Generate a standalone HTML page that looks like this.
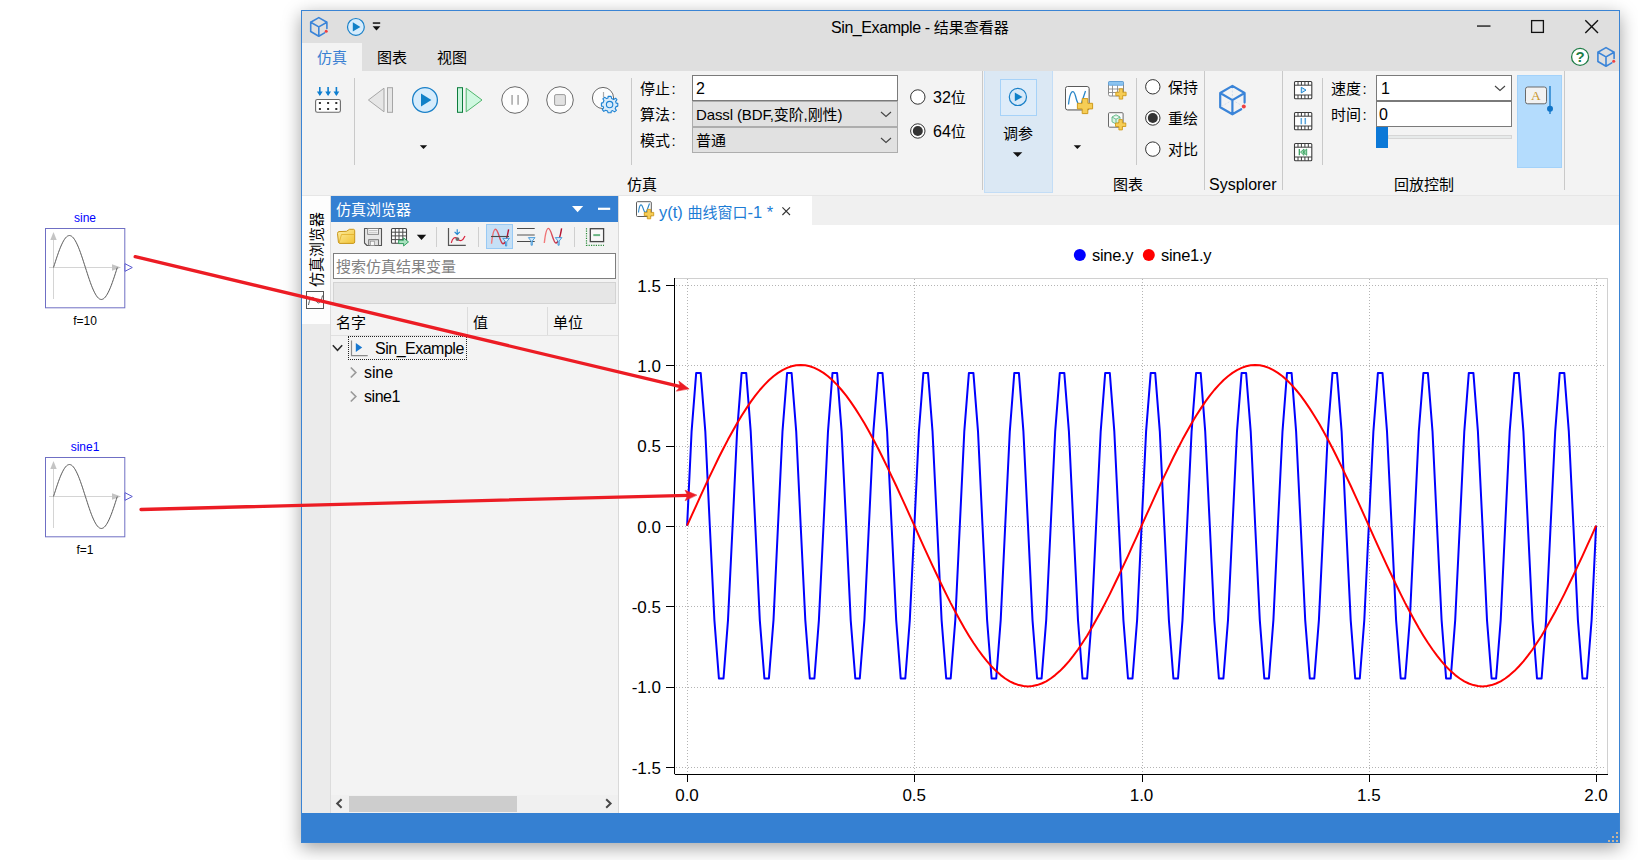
<!DOCTYPE html>
<html><head><meta charset="utf-8"><title>Sin_Example</title>
<style>
html,body{margin:0;padding:0;background:#fff;}
body{width:1638px;height:860px;position:relative;overflow:hidden;font-family:"Liberation Sans","Noto Sans CJK SC",sans-serif;font-size:15px;color:#000;}
.a{position:absolute;}
.t{position:absolute;white-space:nowrap;line-height:20px;height:20px;}
.c{transform:translateX(-50%);}
#win{left:301px;top:10px;width:1319px;height:833px;background:#f3f3f3;box-shadow:0 5px 17px 0 rgba(0,0,0,.37);}
#winb{left:301px;top:10px;width:1317px;height:831px;border:1px solid #3a84d4;pointer-events:none;}
#title{left:302px;top:11px;width:1317px;height:60px;background:#dfdfdf;}
#tab1{left:302px;top:43px;width:60px;height:28px;background:#f3f3f3;}
#ribbon{left:302px;top:71px;width:1317px;height:124px;background:#f3f3f3;}
#status{left:302px;top:813px;width:1317px;height:29px;background:#3580d2;}
.vs{position:absolute;width:1px;background:#c9c9c9;}
.inp{position:absolute;box-sizing:border-box;border:1px solid #7a7a7a;background:#fff;}
.cmb{position:absolute;box-sizing:border-box;border:1px solid #adadad;background:#e1e1e1;}
svg{overflow:visible;}

</style></head><body>
<div class="a" id="win"></div>
<div class="a" id="title"></div>
<div class="a" id="tab1"></div>
<div class="a" id="ribbon"></div>
<div class="a" id="status"></div>
<div class="t" style="left:831px;top:18px" id="ttl"><span style="font-size:16px;letter-spacing:-.42px">Sin_Example - </span>结果查看器</div>
<div class="t" style="left:317px;top:48px;color:#3a80d2" id="tb1">仿真</div>
<div class="t" style="left:377px;top:48px" id="tb2">图表</div>
<div class="t" style="left:437px;top:48px" id="tb3">视图</div>
<svg class="a" style="left:0;top:0" width="1638" height="80" viewBox="0 0 1638 80">
<!-- app cube -->
<g fill="none" stroke="#3a84d8" stroke-width="1.6" stroke-linejoin="round" stroke-linecap="round">
<path d="M326.9 28.5 L326.9 22.2 L318.8 17.6 L310.7 22.2 L310.7 31.5 L318.8 36.2 L324.6 32.9 M310.7 22.2 L318.8 26.9 L326.9 22.2 M318.8 26.9 V36.2"/>
</g>
<circle cx="326.2" cy="31.2" r="1.5" fill="#f04040"/>
<!-- quick play -->
<circle cx="355.9" cy="26.9" r="8.4" fill="#d6ecfc" stroke="#1a80c8" stroke-width="1.2"/>
<path d="M352.8 22.3 L360.4 26.9 L352.8 31.5 Z" fill="#0f80c8"/>
<rect x="372.8" y="22.3" width="7.4" height="1.5" fill="#111"/>
<path d="M372.6 26.3 H380.4 L376.5 30.6 Z" fill="#111"/>
<!-- window controls -->
<rect x="1477" y="25.4" width="13.5" height="1.3" fill="#111"/>
<rect x="1531.6" y="20.6" width="11.8" height="11.8" fill="none" stroke="#111" stroke-width="1.3"/>
<path d="M1585.3 20.3 L1598 33 M1598 20.3 L1585.3 33" stroke="#111" stroke-width="1.4" fill="none"/>
<!-- help -->
<circle cx="1580.1" cy="56.9" r="8.5" fill="#fff" stroke="#1f7d47" stroke-width="1.3"/>
<!-- right cube -->
<g fill="none" stroke="#3a84d8" stroke-width="1.6" stroke-linejoin="round" stroke-linecap="round">
<path d="M1614.1 58.5 L1614.1 52.2 L1606.0 47.6 L1597.9 52.2 L1597.9 61.5 L1606.0 66.2 L1611.8 62.9 M1597.9 52.2 L1606.0 56.9 L1614.1 52.2 M1606.0 56.9 V66.2"/>
</g>
<circle cx="1613.7" cy="61.2" r="1.5" fill="#f04040"/>
</svg>
<div class="t c" style="left:1580.2px;top:47px;font-size:15px;font-weight:bold;color:#1f7d47" id="hlp">?</div>
<!-- ribbon separators -->
<div class="vs" style="left:354px;top:78px;height:87px"></div>
<div class="vs" style="left:631px;top:78px;height:87px"></div>
<div class="vs" style="left:982px;top:71px;height:119px"></div>
<div class="vs" style="left:1136px;top:78px;height:87px"></div>
<div class="vs" style="left:1204px;top:71px;height:119px"></div>
<div class="vs" style="left:1282px;top:71px;height:119px"></div>
<div class="vs" style="left:1322px;top:78px;height:87px"></div>
<div class="vs" style="left:1564px;top:71px;height:119px"></div>
<!-- highlighted tune button -->
<div class="a" style="left:984px;top:71px;width:69px;height:122px;background:#dbe8f4;border:1px solid #c3ddf6;border-top:none;box-sizing:border-box"></div>
<div class="a" style="left:1000px;top:79px;width:37px;height:37px;background:#deecf9;border:1px solid #a6d2f8;box-sizing:border-box"></div>
<div class="a" style="left:1517px;top:75px;width:45px;height:93px;background:#b4dcfd;border:1px solid #a3d2fa;box-sizing:border-box"></div>
<!-- inputs -->
<div class="inp" style="left:692px;top:75px;width:206px;height:26px"></div>
<div class="cmb" style="left:692px;top:101px;width:206px;height:26px"></div>
<div class="cmb" style="left:692px;top:127px;width:206px;height:26px"></div>
<div class="inp" style="left:1376px;top:75px;width:136px;height:26px"></div>
<div class="inp" style="left:1376px;top:101px;width:136px;height:26px"></div>
<div class="a" style="left:1388px;top:135px;width:124px;height:4px;background:#e7eaea;border:1px solid #d6d6d6;box-sizing:border-box"></div>
<div class="a" style="left:1376px;top:127px;width:12px;height:21px;background:#0b78d7"></div>
<!-- texts -->
<div class="t" style="left:640px;top:79px" id="l1">停止<span style="margin-left:1.5px">:</span></div>
<div class="t" style="left:640px;top:105px" id="l2">算法<span style="margin-left:1.5px">:</span></div>
<div class="t" style="left:640px;top:131px" id="l3">模式<span style="margin-left:1.5px">:</span></div>
<div class="t" style="left:696px;top:79px;font-size:16px" id="v1">2</div>
<div class="t" style="left:696px;top:105px;font-size:15px;letter-spacing:-.12px" id="v2">Dassl (BDF,变阶,刚性)</div>
<div class="t" style="left:696px;top:131px" id="v3">普通</div>
<div class="t" style="left:933px;top:88px;font-size:16px" id="r32">32<span style="font-size:15px">位</span></div>
<div class="t" style="left:933px;top:122px;font-size:16px" id="r64">64<span style="font-size:15px">位</span></div>
<div class="t" style="left:1003px;top:124px" id="tune">调参</div>
<div class="t" style="left:1168px;top:78px" id="rb1">保持</div>
<div class="t" style="left:1168px;top:109px" id="rb2">重绘</div>
<div class="t" style="left:1168px;top:140px" id="rb3">对比</div>
<div class="t" style="left:1331px;top:79px" id="l4">速度<span style="margin-left:1.5px">:</span></div>
<div class="t" style="left:1331px;top:105px" id="l5">时间<span style="margin-left:1.5px">:</span></div>
<div class="t" style="left:1381px;top:79px;font-size:16px" id="v4">1</div>
<div class="t" style="left:1379px;top:105px;font-size:16px" id="v5">0</div>
<div class="t" style="left:627px;top:175px" id="g1">仿真</div>
<div class="t" style="left:1113px;top:175px" id="g2">图表</div>
<div class="t" style="left:1209px;top:175px;font-size:16px" id="g3">Sysplorer</div>
<div class="t" style="left:1394px;top:175px" id="g4">回放控制</div>
<svg class="a" style="left:0;top:0" width="1638" height="200" viewBox="0 0 1638 200">
<!-- icon1: arrows + dotted box -->
<g stroke="#0f7fd0" stroke-width="1.6" fill="none" stroke-linecap="butt">
<path d="M319.8 87 V94.5 M328.1 87 V94.5 M336.4 87 V94.5"/>
</g>
<g fill="#0f7fd0"><path d="M316.9 91.6 H322.7 L319.8 96 Z M325.2 91.6 H331 L328.1 96 Z M333.5 91.6 H339.3 L336.4 96 Z"/></g>
<rect x="315.6" y="99.5" width="24.8" height="12.8" rx="1.8" fill="#fff" stroke="#6a6a6a" stroke-width="1.1"/>
<g fill="#333"><rect x="318.9" y="102" width="2" height="2"/><rect x="327.1" y="102" width="2" height="2"/><rect x="335.3" y="102" width="2" height="2"/><rect x="318.9" y="108" width="2" height="2"/><rect x="327.1" y="108" width="2" height="2"/><rect x="335.3" y="108" width="2" height="2"/></g>
<!-- step back -->
<path d="M368.4 100 L384 88.2 V111.8 Z" fill="#e6e6e6" stroke="#a6a6a6" stroke-width="1"/>
<rect x="387.5" y="87.7" width="5" height="24.6" fill="#e6e6e6" stroke="#a6a6a6" stroke-width="1"/>
<!-- play -->
<circle cx="425" cy="100" r="12.4" fill="#d6ecfc" stroke="#1a80c8" stroke-width="1.3"/>
<path d="M421 93.4 L431.4 100 L421 106.6 Z" fill="#0f80c8"/>
<path d="M419.8 145.2 H427.2 L423.5 149 Z" fill="#111"/>
<!-- step fwd -->
<rect x="457.5" y="87.7" width="5" height="24.6" fill="#c9f5dd" stroke="#0c7c3c" stroke-width="1"/>
<path d="M466.2 88.2 L482 100 L466.2 111.8 Z" fill="#cff8e0" stroke="#4fb56c" stroke-width="1"/>
<!-- pause -->
<circle cx="515" cy="100" r="13.3" fill="#fdfdfd" stroke="#6a6a6a" stroke-width="1"/>
<path d="M512.1 95 V104.7 M518.1 95 V104.7" stroke="#b4b4b4" stroke-width="1.8"/>
<!-- stop -->
<circle cx="560" cy="100" r="13.3" fill="#fdfdfd" stroke="#6a6a6a" stroke-width="1"/>
<rect x="554.6" y="94.6" width="10.8" height="10.8" rx="1.5" fill="#e2e2e2" stroke="#9a9a9a" stroke-width="1"/>
<!-- clock + gear -->
<circle cx="603" cy="98" r="10.6" fill="#fdfdfd" stroke="#6a6a6a" stroke-width="1"/>
<path d="M603.5 92 V97.5" stroke="#aaa" stroke-width="1.2"/>
<g id="gear" transform="translate(609.6 104.6)">
<path d="M-1.5 -8.2 H1.5 L2.1 -6 L4 -5.1 L6 -6.4 L7.3 -5 L6 -3 L6.7 -1.3 L8.2 -1.2 V1.5 L6.5 2 L5.6 4 L6.8 5.8 L5 7.3 L3 6 L1.6 6.6 L1.5 8.2 H-1.5 L-2 6.5 L-4 5.6 L-5.8 6.8 L-7.3 5 L-6 3 L-6.6 1.6 L-8.2 1.5 V-1.5 L-6.5 -2 L-5.6 -4 L-6.8 -5.8 L-5 -7.3 L-3 -6 L-1.6 -6.6 Z" fill="#d9ecfb" stroke="#1e82d2" stroke-width="1.1" stroke-linejoin="round"/>
<circle cx="0" cy="0" r="3.2" fill="#d6ebfb" stroke="#1e82d2" stroke-width="1.1"/>
</g>
<!-- combos chevrons -->
<g fill="none" stroke="#444" stroke-width="1.1">
<path d="M881 112 L886 116.5 L891 112"/><path d="M881 138 L886 142.5 L891 138"/><path d="M1495 86 L1500 90.5 L1505 86"/>
</g>
<!-- radios 32/64 -->
<g fill="#fff" stroke="#333" stroke-width="1">
<circle cx="917.8" cy="97" r="7.2"/><circle cx="917.8" cy="131" r="7.2"/>
<circle cx="1152.8" cy="86.8" r="7.2"/><circle cx="1152.8" cy="118" r="7.2"/><circle cx="1152.8" cy="149.1" r="7.2"/>
</g>
<circle cx="917.8" cy="131" r="5" fill="#333"/><circle cx="1152.8" cy="118" r="5" fill="#333"/>
<!-- tune play -->
<circle cx="1017.9" cy="96.9" r="8.6" fill="#d6e9f9" stroke="#1a80c8" stroke-width="1.2"/>
<path d="M1014.8 92.6 L1022.5 96.9 L1014.8 101.3 Z" fill="#0f80c8"/>
<path d="M1012.9 152.2 H1022.3 L1017.6 157 Z" fill="#111"/>
<!-- chart+ icon -->
<rect x="1066.2" y="87.2" width="23.6" height="23.4" rx="2" fill="#9a9a9a" opacity=".5"/>
<rect x="1065.5" y="86.5" width="23.6" height="23.4" rx="2" fill="#fff" stroke="#5a5a5a" stroke-width="1"/>
<path d="M1068.5 104.5 C1070 90 1073.5 88.5 1075.5 96 C1077.500 104 1080 110 1082.5 100 L1085.5 91" fill="none" stroke="#2a86c8" stroke-width="1.3"/>
<path d="M1082.2 98.6 H1087.8 V103.3 H1092.6 V108.9 H1087.8 V113.6 H1082.2 V108.9 H1077.4 V103.3 H1082.2 Z" fill="#f6cd55" stroke="#cf9a1c" stroke-width="1" stroke-linejoin="round"/>
<path d="M1073.700 145.2 H1081.1 L1077.4 149 Z" fill="#111"/>
<!-- table+ icon -->
<rect x="1108.5" y="81.500" width="15" height="14.5" rx="1.5" fill="#fff" stroke="#8a8a8a" stroke-width="1"/>
<rect x="1108.500" y="81.500" width="15" height="3.8" rx="1" fill="#8cc4f0" stroke="#5aa0dc" stroke-width=".8"/>
<path d="M1108.5 89 H1123.5 M1108.5 92.500 H1123.5 M1112.5 85.5 V96 M1117.5 85.5 V96" stroke="#8a8a8a" stroke-width=".9" fill="none"/>
<path d="M1119.2 88.8 H1122.700 V92.2 H1126.100 V95.700 H1122.700 V99.100 H1119.2 V95.700 H1115.8 V92.2 H1119.2 Z" fill="#f6cd55" stroke="#cf9a1c" stroke-width=".9" stroke-linejoin="round"/>
<!-- cube+ icon -->
<rect x="1108.500" y="112.700" width="14.600" height="14.500" rx="1" fill="#fbfbfb" stroke="#6a6a6a" stroke-width="1"/>
<path d="M1116 114.800 L1120 117 V121.800 L1116 124 L1112 121.800 V117 Z M1112 117 L1116 119.2 L1120 117 M1116 119.2 V124" fill="#d8f2e2" stroke="#5fb583" stroke-width=".9" stroke-linejoin="round"/>
<path d="M1118.900 119.600 H1122.400 V123 H1125.800 V126.500 H1122.400 V129.900 H1118.900 V126.500 H1115.500 V123 H1118.900 Z" fill="#f6cd55" stroke="#cf9a1c" stroke-width=".9" stroke-linejoin="round"/>
<!-- sysplorer cube -->
<g stroke="#c3d6ec" stroke-width=".7" stroke-dasharray="2 1.5" fill="none"><path d="M1232.4 87 V100.1 M1232.4 100.1 L1221 106.700 M1232.4 100.1 L1243.500 106.500"/></g>
<g fill="none" stroke="#3a84d8" stroke-width="2.2" stroke-linejoin="round" stroke-linecap="round">
<path d="M1244.6 102.6 L1244.6 93.0 L1232.4 85.9 L1220.2 93.0 L1220.2 107.2 L1232.4 114.3 L1241.2 109.2 M1220.2 93.0 L1232.4 100.1 L1244.6 93.0 M1232.4 100.1 V114.3"/>
</g>

<circle cx="1243.800" cy="106.500" r="2" fill="#f04040"/>
<!-- film icons -->
<g>
<rect x="1294.500" y="81.500" width="17.300" height="17.300" rx="1" fill="#fff" stroke="#3c3c3c" stroke-width="1.1"/>
<path d="M1294.500 85.200 H1311.800 M1294.500 95 H1311.800" stroke="#3c3c3c" stroke-width="1" fill="none"/>
<path d="M1298 81.500 V85.200 M1301.400 81.500 V85.200 M1304.900 81.500 V85.200 M1308.300 81.500 V85.200 M1298 95 V98.800 M1301.400 95 V98.800 M1304.900 95 V98.800 M1308.300 95 V98.800" stroke="#3c3c3c" stroke-width="1" fill="none"/>
</g>
<g transform="translate(0 31)">
<rect x="1294.500" y="81.500" width="17.300" height="17.300" rx="1" fill="#fff" stroke="#3c3c3c" stroke-width="1.1"/>
<path d="M1294.500 85.200 H1311.800 M1294.500 95 H1311.800" stroke="#3c3c3c" stroke-width="1" fill="none"/>
<path d="M1298 81.500 V85.200 M1301.400 81.500 V85.200 M1304.900 81.500 V85.200 M1308.300 81.500 V85.200 M1298 95 V98.800 M1301.400 95 V98.800 M1304.900 95 V98.800 M1308.300 95 V98.800" stroke="#3c3c3c" stroke-width="1" fill="none"/>
</g>
<g transform="translate(0 62)">
<rect x="1294.500" y="81.500" width="17.300" height="17.300" rx="1" fill="#fff" stroke="#3c3c3c" stroke-width="1.1"/>
<path d="M1294.500 85.200 H1311.800 M1294.500 95 H1311.800" stroke="#3c3c3c" stroke-width="1" fill="none"/>
<path d="M1298 81.500 V85.200 M1301.400 81.500 V85.200 M1304.900 81.500 V85.200 M1308.300 81.500 V85.200 M1298 95 V98.800 M1301.400 95 V98.800 M1304.900 95 V98.800 M1308.300 95 V98.800" stroke="#3c3c3c" stroke-width="1" fill="none"/>
</g>
<path d="M1301.300 87.300 L1306 90.100 L1301.300 92.900 Z" fill="#d5ebfb" stroke="#1e86d0" stroke-width="1"/>
<path d="M1301.300 118 V124.300 M1305.300 118 V124.300" stroke="#5aa6dc" stroke-width="1.5"/>
<path d="M1299.300 149 V155.300" stroke="#2e9a55" stroke-width="1.200"/><path d="M1300.500 152.100 L1304 149 V155.300 Z M1303.200 152.100 L1306.700 149 V155.300 Z" fill="#9ad8b0" stroke="#2e9a55" stroke-width=".8"/>
<!-- A button -->
<rect x="1525.500" y="87" width="21" height="16.800" rx="2.200" fill="#f2f2f2" stroke="#6a6a6a" stroke-width="1"/>
<path d="M1550 86 V114" stroke="#0f74c8" stroke-width="1.300"/>
<circle cx="1550" cy="108.800" r="3" fill="#0f74c8"/>
</svg>
<div class="t" style="left:1531px;top:85.500px;font-family:'Liberation Serif',serif;font-size:13.500px;color:#c9952b" id="abtn">A</div>
<!-- dock area -->
<div class="a" style="left:302px;top:195px;width:1317px;height:1px;background:#e6e6e6"></div>
<div class="a" style="left:302px;top:196px;width:29px;height:617px;background:#ebebeb"></div>
<div class="a" style="left:302px;top:196px;width:29px;height:128px;background:#fdfdfd"></div>
<div class="a" style="left:331px;top:196px;width:287px;height:617px;background:#f3f3f3"></div>
<div class="a" style="left:330px;top:196px;width:1px;height:617px;background:#dcdcdc"></div>
<div class="a" style="left:618px;top:196px;width:1px;height:617px;background:#d9d9d9"></div>
<div class="a" style="left:331px;top:196px;width:287px;height:26px;background:#3580d2"></div>
<div class="a" style="left:619px;top:196px;width:1000px;height:29px;background:#f0f0f0"></div>
<div class="a" style="left:619px;top:196px;width:193px;height:29px;background:#fff"></div>
<div class="a" style="left:619px;top:225px;width:1000px;height:588px;background:#fff"></div>
<div class="t" style="left:336px;top:200px;color:#fff" id="dk">仿真浏览器</div>
<div class="t" style="left:659px;top:202px;color:#1c7cd5" id="ct"><span style="font-size:16.5px">y(t) </span>曲线窗口<span style="font-size:16.5px">-1 *</span></div>
<div class="t" id="vt" style="left:307px;top:286.5px;width:75px;transform-origin:0 0;transform:translate(0,0) rotate(-90deg)">仿真浏览器</div>
<!-- toolbar highlight -->
<div class="a" style="left:486px;top:224px;width:27px;height:25px;background:#c6e0f6;border:1px solid #98c9f4;box-sizing:border-box"></div>
<div class="vs" style="left:436px;top:227px;height:20px;background:#cfcfcf"></div>
<div class="vs" style="left:478px;top:227px;height:20px;background:#cfcfcf"></div>
<div class="vs" style="left:574px;top:227px;height:20px;background:#cfcfcf"></div>
<div class="inp" style="left:333px;top:253px;width:283px;height:26px;border-color:#7e7e7e"></div>
<div class="t" style="left:336px;top:257px;color:#828282" id="ph">搜索仿真结果变量</div>
<div class="a" style="left:333px;top:282px;width:283px;height:22px;background:#e6e6e6;border:1px solid #d3d3d3;box-sizing:border-box"></div>
<!-- header -->
<div class="vs" style="left:467px;top:307px;height:28px;background:#dcdcdc"></div>
<div class="vs" style="left:547px;top:307px;height:28px;background:#dcdcdc"></div>
<div class="a" style="left:331px;top:335px;width:287px;height:1px;background:#e0e0e0"></div>
<div class="t" style="left:336px;top:313px" id="h1">名字</div>
<div class="t" style="left:473px;top:313px" id="h2">值</div>
<div class="t" style="left:553px;top:313px" id="h3">单位</div>
<div class="a" style="left:348px;top:336px;width:119px;height:24px;border:1px dotted #222;box-sizing:border-box"></div>
<div class="t" style="left:375px;top:339px;font-size:16px;letter-spacing:-.5px" id="tr1">Sin_Example</div>
<div class="t" style="left:364px;top:363px;font-size:16px;letter-spacing:-.1px" id="tr2">sine</div>
<div class="t" style="left:364px;top:387px;font-size:16px;letter-spacing:-.45px" id="tr3">sine1</div>
<!-- h scrollbar -->
<div class="a" style="left:331px;top:795px;width:287px;height:18px;background:#f0f0f0"></div>
<div class="a" style="left:349px;top:796px;width:168px;height:16px;background:#cdcdcd"></div>
<svg class="a" style="left:0;top:0" width="1638" height="860" viewBox="0 0 1638 860">
<defs>
<linearGradient id="gf" x1="0" y1="0" x2="1" y2="1"><stop offset="0" stop-color="#fdeea6"/><stop offset="1" stop-color="#f1c232"/></linearGradient>
<linearGradient id="gr" x1="0" y1="0" x2="1" y2="0"><stop offset="0" stop-color="#f47c7c"/><stop offset="1" stop-color="#b00d2c"/></linearGradient>
</defs>
<!-- dock title controls -->
<path d="M572 206 H583.2 L577.6 212.2 Z" fill="#fff"/>
<rect x="598" y="207.700" width="12.200" height="2.200" fill="#fff"/>
<!-- vertical tab icon -->
<rect x="306.500" y="291.500" width="17" height="17" fill="#fff" stroke="#555" stroke-width="1"/>
<path d="M308.500 305 C310 296.500 313 295.500 315.500 300 C318 304.500 320.500 304.500 322.500 295.500" fill="none" stroke="#555" stroke-width="1"/>
<!-- folder -->
<path d="M337.500 233.500 Q337.500 231.800 339 231.600 L346.500 231.300 L349.500 229.300 H353.500 Q354.700 229.400 354.700 230.800 V242 Q354.700 243.300 353.300 243.400 H340 Q338.600 243.300 338.400 242 Z" fill="url(#gf)" stroke="#c8961a" stroke-width="1" stroke-linejoin="round"/>
<path d="M339 243 L341.500 234.500 H354.500" fill="none" stroke="#e0ae2a" stroke-width=".8"/>
<!-- floppy -->
<path d="M364.500 228.500 H381.500 V245.500 H367 L364.500 243 Z" fill="#e6e6e6" stroke="#555" stroke-width="1.1" stroke-linejoin="round"/>
<rect x="367.700" y="228.500" width="10.800" height="5.800" fill="#fafafa" stroke="#7a7a7a" stroke-width=".9"/>
<path d="M369 230.500 H377.500 M369 232.300 H377.500" stroke="#aaa" stroke-width=".7"/>
<rect x="368.700" y="239.700" width="9.800" height="5.800" fill="#e0e0e0" stroke="#6a6a6a" stroke-width=".9"/>
<rect x="370.300" y="241.200" width="4" height="4.300" fill="#fafafa" stroke="#8a8a8a" stroke-width=".7"/>
<!-- grid -->
<rect x="391.500" y="228.500" width="15" height="14.800" rx="1" fill="#fff" stroke="#444" stroke-width="1.1"/>
<path d="M395.300 228.500 V243.300 M399 228.500 V243.300 M402.800 228.500 V243.300 M391.500 232.200 H406.500 M391.500 235.900 H406.500 M391.500 239.600 H406.500" stroke="#4a4a4a" stroke-width="1" fill="none"/>
<path d="M398.700 240.200 H403.600 V237.800 L408.500 241.900 L403.600 246 V243.600 H398.700 Z" fill="#a9e2bf" stroke="#2a9d5a" stroke-width=".9" stroke-linejoin="round"/>
<path d="M416.800 234.800 H426.200 L421.500 240 Z" fill="#111"/>
<!-- axis icon -->
<path d="M448.500 228 V245.300 H465.800" fill="none" stroke="#555" stroke-width="1.200"/>
<path d="M451.300 242.800 C452.500 237.500 455 236.500 457.400 238.800 C460 241.500 462.500 241.500 465 236" fill="none" stroke="#d8203a" stroke-width="1.200"/>
<circle cx="457.400" cy="239.100" r="1.900" fill="#6a6a6a"/>
<path d="M457.200 229.300 V234.300 M454.600 231.800 L457.200 234.500 L459.800 231.800" fill="none" stroke="#1e86d0" stroke-width="1.100"/>
<!-- filter curve icon (active) -->
<path d="M491.500 243.800 C492.500 234 493.500 229.300 495.500 229.300 C498.500 229.300 500 243.800 503 243.800 C505.500 243.800 507.500 236 508.600 229.300" fill="none" stroke="url(#gr)" stroke-width="1.400"/>
<path d="M491 236.500 H509" stroke="#4a4a4a" stroke-width="1.100"/>
<path d="M502.800 238.400 H509.400 L506.700 241.800 V246 H505.500 V241.800 Z" fill="#d6ebfa" stroke="#2a8ad4" stroke-width=".8" stroke-linejoin="round"/>
<!-- lines filter icon -->
<path d="M517 228.500 H534.700 M517 241.500 H534.700" stroke="#4a4a4a" stroke-width="1.100"/>
<path d="M517 235 H534.700" stroke="#9a9a9a" stroke-width="1.800"/>
<path d="M528.400 237.600 H535 L532.300 241 V245.200 H531.100 V241 Z" fill="#d6ebfa" stroke="#2a8ad4" stroke-width=".8" stroke-linejoin="round"/>
<!-- curve filter icon -->
<path d="M544.300 243 C545.300 233.500 546.500 228.400 548.400 228.400 C551.400 228.400 553 243 556 243 C558.500 243 560.500 235 561.600 228.400" fill="none" stroke="url(#gr)" stroke-width="1.400"/>
<path d="M555.300 237.600 H561.900 L559.200 241 V245.200 H558 V241 Z" fill="#d6ebfa" stroke="#2a8ad4" stroke-width=".8" stroke-linejoin="round"/>
<!-- collapse icon -->
<path d="M586.500 228.200 V245.300 H604" fill="none" stroke="#2a8a3a" stroke-width="1.200" stroke-dasharray="1.200 1.200"/>
<rect x="590.300" y="228.700" width="13.300" height="12.900" fill="#f8f8f8" stroke="#444" stroke-width="1.300"/>
<path d="M593.300 235.100 H600.100" stroke="#6ab583" stroke-width="2"/>
<!-- tab icon -->
<rect x="636.500" y="201.700" width="14.800" height="14.800" rx="1" fill="#fff" stroke="#5a5a5a" stroke-width="1"/>
<path d="M638.500 212.500 C639.500 203.500 641.500 203 643 208 C644.500 213 646 214 647.500 209 L649.500 203.500" fill="none" stroke="#2a86c8" stroke-width="1.100"/>
<path d="M647.300 209.400 H650.700 V212.400 H653.700 V215.800 H650.700 V218.800 H647.300 V215.800 H644.300 V212.400 H647.300 Z" fill="#f6cd55" stroke="#cf9a1c" stroke-width=".9" stroke-linejoin="round"/>
<path d="M782.400 207.400 L790 215 M790 207.400 L782.400 215" stroke="#333" stroke-width="1.100" fill="none"/>
<!-- tree chevrons -->
<path d="M332.800 345.300 L337.500 350.300 L342.200 345.300" fill="none" stroke="#2a2a2a" stroke-width="1.500"/>
<path d="M350.800 367.500 L355.800 372.500 L350.800 377.500" fill="none" stroke="#9a9a9a" stroke-width="1.700"/>
<path d="M350.800 391.500 L355.800 396.500 L350.800 401.500" fill="none" stroke="#9a9a9a" stroke-width="1.700"/>
<!-- tree icon -->
<path d="M351.500 340.600 V355.700 H367.700" fill="none" stroke="#8a8a8a" stroke-width="1.200"/>
<path d="M355.800 343 L362.200 347.500 L355.800 352 Z" fill="#1778d0"/>
<!-- scrollbar arrows -->
<path d="M341.600 799.300 L337.200 803.500 L341.600 807.700" fill="none" stroke="#484848" stroke-width="2"/>
<path d="M606.200 799.300 L610.600 803.500 L606.200 807.700" fill="none" stroke="#484848" stroke-width="2"/>
<!-- status grip -->
<g fill="#c9b49a" transform="translate(1 1)"><rect x="1615" y="831" width="2" height="2"/><rect x="1611" y="835" width="2" height="2"/><rect x="1615" y="835" width="2" height="2"/><rect x="1607" y="839" width="2" height="2"/><rect x="1611" y="839" width="2" height="2"/><rect x="1615" y="839" width="2" height="2"/></g>
</svg>
<svg class="a" style="left:0;top:0" width="1638" height="860" viewBox="0 0 1638 860">
<rect x="674.5" y="278.5" width="933" height="496" fill="#fff" stroke="#d0d0d0"/>
<g stroke="#b4b4b4" stroke-width="1" stroke-dasharray="1 2" shape-rendering="crispEdges"><line x1="676" y1="285.5" x2="1605" y2="285.5"/><line x1="676" y1="365.5" x2="1605" y2="365.5"/><line x1="676" y1="446.5" x2="1605" y2="446.5"/><line x1="676" y1="526.5" x2="1605" y2="526.5"/><line x1="676" y1="606.5" x2="1605" y2="606.5"/><line x1="676" y1="687.5" x2="1605" y2="687.5"/><line x1="676" y1="767.5" x2="1605" y2="767.5"/><line x1="687.5" y1="279" x2="687.5" y2="774"/><line x1="914.5" y1="279" x2="914.5" y2="774"/><line x1="1142.5" y1="279" x2="1142.5" y2="774"/><line x1="1369.5" y1="279" x2="1369.5" y2="774"/><line x1="1596.5" y1="279" x2="1596.5" y2="774"/></g>
<polyline transform="translate(-.4 -.8)" points="687.5,526.5 692.0,432.1 696.6,373.7 701.1,373.7 705.7,432.1 710.2,526.5 714.8,620.9 719.3,679.3 723.9,679.3 728.4,620.9 733.0,526.5 737.5,432.1 742.0,373.7 746.6,373.7 751.1,432.1 755.7,526.5 760.2,620.9 764.8,679.3 769.3,679.3 773.9,620.9 778.4,526.5 782.9,432.1 787.5,373.7 792.0,373.7 796.6,432.1 801.1,526.5 805.7,620.9 810.2,679.3 814.8,679.3 819.3,620.9 823.9,526.5 828.4,432.1 832.9,373.7 837.5,373.7 842.0,432.1 846.6,526.5 851.1,620.9 855.7,679.3 860.2,679.3 864.8,620.9 869.3,526.5 873.8,432.1 878.4,373.7 882.9,373.7 887.5,432.1 892.0,526.5 896.6,620.9 901.1,679.3 905.7,679.3 910.2,620.9 914.8,526.5 919.3,432.1 923.8,373.7 928.4,373.7 932.9,432.1 937.5,526.5 942.0,620.9 946.6,679.3 951.1,679.3 955.7,620.9 960.2,526.5 964.7,432.1 969.3,373.7 973.8,373.7 978.4,432.1 982.9,526.5 987.5,620.9 992.0,679.3 996.6,679.3 1001.1,620.9 1005.6,526.5 1010.2,432.1 1014.7,373.7 1019.3,373.7 1023.8,432.1 1028.4,526.5 1032.9,620.9 1037.5,679.3 1042.0,679.3 1046.6,620.9 1051.1,526.5 1055.6,432.1 1060.2,373.7 1064.7,373.7 1069.3,432.1 1073.8,526.5 1078.4,620.9 1082.9,679.3 1087.5,679.3 1092.0,620.9 1096.5,526.5 1101.1,432.1 1105.6,373.7 1110.2,373.7 1114.7,432.1 1119.3,526.5 1123.8,620.9 1128.4,679.3 1132.9,679.3 1137.5,620.9 1142.0,526.5 1146.5,432.1 1151.1,373.7 1155.6,373.7 1160.2,432.1 1164.7,526.5 1169.3,620.9 1173.8,679.3 1178.4,679.3 1182.9,620.9 1187.5,526.5 1192.0,432.1 1196.5,373.7 1201.1,373.7 1205.6,432.1 1210.2,526.5 1214.7,620.9 1219.3,679.3 1223.8,679.3 1228.4,620.9 1232.9,526.5 1237.4,432.1 1242.0,373.7 1246.5,373.7 1251.1,432.1 1255.6,526.5 1260.2,620.9 1264.7,679.3 1269.3,679.3 1273.8,620.9 1278.3,526.5 1282.9,432.1 1287.4,373.7 1292.0,373.7 1296.5,432.1 1301.1,526.5 1305.6,620.9 1310.2,679.3 1314.7,679.3 1319.3,620.9 1323.8,526.5 1328.3,432.1 1332.9,373.7 1337.4,373.7 1342.0,432.1 1346.5,526.5 1351.1,620.9 1355.6,679.3 1360.2,679.3 1364.7,620.9 1369.2,526.5 1373.8,432.1 1378.3,373.7 1382.9,373.7 1387.4,432.1 1392.0,526.5 1396.5,620.9 1401.1,679.3 1405.6,679.3 1410.2,620.9 1414.7,526.5 1419.2,432.1 1423.8,373.7 1428.3,373.7 1432.9,432.1 1437.4,526.5 1442.0,620.9 1446.5,679.3 1451.1,679.3 1455.6,620.9 1460.2,526.5 1464.7,432.1 1469.2,373.7 1473.8,373.7 1478.3,432.1 1482.9,526.5 1487.4,620.9 1492.0,679.3 1496.5,679.3 1501.1,620.9 1505.6,526.5 1510.1,432.1 1514.7,373.7 1519.2,373.7 1523.8,432.1 1528.3,526.5 1532.9,620.9 1537.4,679.3 1542.0,679.3 1546.5,620.9 1551.0,526.5 1555.6,432.1 1560.1,373.7 1564.7,373.7 1569.2,432.1 1573.8,526.5 1578.3,620.9 1582.9,679.3 1587.4,679.3 1592.0,620.9 1596.5,526.5" fill="none" stroke="#0000ff" stroke-width="2" stroke-linejoin="round"/>
<polyline transform="translate(-.4 -.8)" points="687.5,526.5 692.0,516.4 696.6,506.4 701.1,496.4 705.7,486.5 710.2,476.9 714.8,467.4 719.3,458.1 723.9,449.1 728.4,440.4 733.0,432.1 737.5,424.1 742.0,416.5 746.6,409.4 751.1,402.7 755.7,396.5 760.2,390.8 764.8,385.7 769.3,381.1 773.9,377.1 778.4,373.7 782.9,370.9 787.5,368.7 792.0,367.1 796.6,366.1 801.1,365.8 805.7,366.1 810.2,367.1 814.8,368.7 819.3,370.9 823.9,373.7 828.4,377.1 832.9,381.1 837.5,385.7 842.0,390.8 846.6,396.5 851.1,402.7 855.7,409.4 860.2,416.5 864.8,424.1 869.3,432.1 873.8,440.4 878.4,449.1 882.9,458.1 887.5,467.4 892.0,476.9 896.6,486.5 901.1,496.4 905.7,506.4 910.2,516.4 914.8,526.5 919.3,536.6 923.8,546.6 928.4,556.6 932.9,566.5 937.5,576.1 942.0,585.6 946.6,594.9 951.1,603.9 955.7,612.6 960.2,620.9 964.7,628.9 969.3,636.5 973.8,643.6 978.4,650.3 982.9,656.5 987.5,662.2 992.0,667.3 996.6,671.9 1001.1,675.9 1005.6,679.3 1010.2,682.1 1014.7,684.3 1019.3,685.9 1023.8,686.9 1028.4,687.2 1032.9,686.9 1037.5,685.9 1042.0,684.3 1046.6,682.1 1051.1,679.3 1055.6,675.9 1060.2,671.9 1064.7,667.3 1069.3,662.2 1073.8,656.5 1078.4,650.3 1082.9,643.6 1087.5,636.5 1092.0,628.9 1096.5,620.9 1101.1,612.6 1105.6,603.9 1110.2,594.9 1114.7,585.6 1119.3,576.1 1123.8,566.5 1128.4,556.6 1132.9,546.6 1137.5,536.6 1142.0,526.5 1146.5,516.4 1151.1,506.4 1155.6,496.4 1160.2,486.5 1164.7,476.9 1169.3,467.4 1173.8,458.1 1178.4,449.1 1182.9,440.4 1187.5,432.1 1192.0,424.1 1196.5,416.5 1201.1,409.4 1205.6,402.7 1210.2,396.5 1214.7,390.8 1219.3,385.7 1223.8,381.1 1228.4,377.1 1232.9,373.7 1237.4,370.9 1242.0,368.7 1246.5,367.1 1251.1,366.1 1255.6,365.8 1260.2,366.1 1264.7,367.1 1269.3,368.7 1273.8,370.9 1278.3,373.7 1282.9,377.1 1287.4,381.1 1292.0,385.7 1296.5,390.8 1301.1,396.5 1305.6,402.7 1310.2,409.4 1314.7,416.5 1319.3,424.1 1323.8,432.1 1328.3,440.4 1332.9,449.1 1337.4,458.1 1342.0,467.4 1346.5,476.9 1351.1,486.5 1355.6,496.4 1360.2,506.4 1364.7,516.4 1369.2,526.5 1373.8,536.6 1378.3,546.6 1382.9,556.6 1387.4,566.5 1392.0,576.1 1396.5,585.6 1401.1,594.9 1405.6,603.9 1410.2,612.6 1414.7,620.9 1419.2,628.9 1423.8,636.5 1428.3,643.6 1432.9,650.3 1437.4,656.5 1442.0,662.2 1446.5,667.3 1451.1,671.9 1455.6,675.9 1460.2,679.3 1464.7,682.1 1469.2,684.3 1473.8,685.9 1478.3,686.9 1482.9,687.2 1487.4,686.9 1492.0,685.9 1496.5,684.3 1501.1,682.1 1505.6,679.3 1510.1,675.9 1514.7,671.9 1519.2,667.3 1523.8,662.2 1528.3,656.5 1532.9,650.3 1537.4,643.6 1542.0,636.5 1546.5,628.9 1551.0,620.9 1555.6,612.6 1560.1,603.9 1564.7,594.9 1569.2,585.6 1573.8,576.1 1578.3,566.5 1582.9,556.6 1587.4,546.6 1592.0,536.6 1596.5,526.5" fill="none" stroke="#ff0000" stroke-width="2" stroke-linejoin="round"/>
<g stroke="#000" stroke-width="1" shape-rendering="crispEdges"><line x1="666" y1="285.5" x2="674" y2="285.5"/><line x1="666" y1="365.5" x2="674" y2="365.5"/><line x1="666" y1="446.5" x2="674" y2="446.5"/><line x1="666" y1="526.5" x2="674" y2="526.5"/><line x1="666" y1="606.5" x2="674" y2="606.5"/><line x1="666" y1="687.5" x2="674" y2="687.5"/><line x1="666" y1="767.5" x2="674" y2="767.5"/><line x1="687.5" y1="775" x2="687.5" y2="782"/><line x1="914.5" y1="775" x2="914.5" y2="782"/><line x1="1142.5" y1="775" x2="1142.5" y2="782"/><line x1="1369.5" y1="775" x2="1369.5" y2="782"/><line x1="1596.5" y1="775" x2="1596.5" y2="782"/></g>
<g stroke="#000" stroke-width="1" shape-rendering="crispEdges"><line x1="674.5" y1="278" x2="674.5" y2="774"/><line x1="675" y1="774.5" x2="1608" y2="774.5"/></g>
<g font-family="Liberation Sans, sans-serif" font-size="17" fill="#000"><text x="661" y="291.7" text-anchor="end">1.5</text><text x="661" y="372.0" text-anchor="end">1.0</text><text x="661" y="452.4" text-anchor="end">0.5</text><text x="661" y="532.7" text-anchor="end">0.0</text><text x="661" y="613.0" text-anchor="end">-0.5</text><text x="661" y="693.4" text-anchor="end">-1.0</text><text x="661" y="773.7" text-anchor="end">-1.5</text><text x="687.0" y="800.7" text-anchor="middle">0.0</text><text x="914.2" y="800.7" text-anchor="middle">0.5</text><text x="1141.5" y="800.7" text-anchor="middle">1.0</text><text x="1368.8" y="800.7" text-anchor="middle">1.5</text><text x="1596.0" y="800.7" text-anchor="middle">2.0</text></g>
<g font-family="Liberation Sans, sans-serif" font-size="16.5" fill="#000" letter-spacing="-.3"><text x="1092" y="260.5">sine.y</text><text x="1161" y="260.5">sine1.y</text></g>
<circle cx="1079.8" cy="255" r="6" fill="#0000ff"/><circle cx="1148.8" cy="255" r="6" fill="#ff0000"/>
</svg><div class="a" id="winb"></div>
<svg class="a" style="left:0;top:0" width="1638" height="860" viewBox="0 0 1638 860">
<g transform="translate(0 228)">
<rect x="45.500" y="0.500" width="79.300" height="79.300" fill="#fff" stroke="#6f6fc4" stroke-width="1"/>
<path d="M53.500 7 V71" stroke="#d4d4d4" stroke-width="1"/>
<path d="M49 39.500 H117" stroke="#d4d4d4" stroke-width="1"/>
<path d="M53.500 4 L56.700 12 H50.300 Z" fill="#c4c4c4"/>
<path d="M121 39.500 L112 36.300 V42.700 Z" fill="#c4c4c4"/>
<path d="M125 35.700 L132.300 39.500 L125 43.300 Z" fill="#fff" stroke="#5a5ad0" stroke-width="1"/>
</g>
<g transform="translate(0 457)">
<rect x="45.500" y="0.500" width="79.300" height="79.300" fill="#fff" stroke="#6f6fc4" stroke-width="1"/>
<path d="M53.500 7 V71" stroke="#d4d4d4" stroke-width="1"/>
<path d="M49 39.500 H117" stroke="#d4d4d4" stroke-width="1"/>
<path d="M53.500 4 L56.700 12 H50.300 Z" fill="#c4c4c4"/>
<path d="M121 39.500 L112 36.300 V42.700 Z" fill="#c4c4c4"/>
<path d="M125 35.700 L132.300 39.500 L125 43.300 Z" fill="#fff" stroke="#5a5ad0" stroke-width="1"/>
</g>
<path d="M53.5 267.5 L54.5 264.4 L55.5 261.3 L56.5 258.2 L57.5 255.3 L58.5 252.4 L59.5 249.7 L60.5 247.2 L61.5 244.9 L62.5 242.8 L63.5 240.9 L64.5 239.3 L65.5 237.9 L66.5 236.9 L67.5 236.1 L68.5 235.7 L69.5 235.5 L70.4 235.7 L71.4 236.1 L72.4 236.9 L73.4 237.9 L74.4 239.3 L75.4 240.9 L76.4 242.8 L77.4 244.9 L78.4 247.2 L79.4 249.7 L80.4 252.4 L81.4 255.3 L82.4 258.2 L83.4 261.3 L84.4 264.4 L85.4 267.5 L86.4 270.6 L87.4 273.7 L88.4 276.8 L89.4 279.7 L90.4 282.6 L91.4 285.3 L92.4 287.8 L93.4 290.1 L94.4 292.2 L95.4 294.1 L96.4 295.7 L97.4 297.1 L98.4 298.1 L99.4 298.9 L100.4 299.3 L101.3 299.5 L102.3 299.3 L103.3 298.9 L104.3 298.1 L105.3 297.1 L106.3 295.7 L107.3 294.1 L108.3 292.2 L109.3 290.1 L110.3 287.8 L111.3 285.3 L112.3 282.6 L113.3 279.7 L114.3 276.8 L115.3 273.7 L116.3 270.6 L117.3 267.5" fill="none" stroke="#5a5a5a" stroke-width="1"/><path d="M53.5 496.5 L54.5 493.4 L55.5 490.3 L56.5 487.2 L57.5 484.3 L58.5 481.4 L59.5 478.7 L60.5 476.2 L61.5 473.9 L62.5 471.8 L63.5 469.9 L64.5 468.3 L65.5 466.9 L66.5 465.9 L67.5 465.1 L68.5 464.7 L69.5 464.5 L70.4 464.7 L71.4 465.1 L72.4 465.9 L73.4 466.9 L74.4 468.3 L75.4 469.9 L76.4 471.8 L77.4 473.9 L78.4 476.2 L79.4 478.7 L80.4 481.4 L81.4 484.3 L82.4 487.2 L83.4 490.3 L84.4 493.4 L85.4 496.5 L86.4 499.6 L87.4 502.7 L88.4 505.8 L89.4 508.7 L90.4 511.6 L91.4 514.3 L92.4 516.8 L93.4 519.1 L94.4 521.2 L95.4 523.1 L96.4 524.7 L97.4 526.1 L98.4 527.1 L99.4 527.9 L100.4 528.3 L101.3 528.5 L102.3 528.3 L103.3 527.9 L104.3 527.1 L105.3 526.1 L106.3 524.7 L107.3 523.1 L108.3 521.2 L109.3 519.1 L110.3 516.8 L111.3 514.3 L112.3 511.6 L113.3 508.7 L114.3 505.8 L115.3 502.7 L116.3 499.6 L117.3 496.5" fill="none" stroke="#5a5a5a" stroke-width="1"/>
<g stroke="#ec1c24" stroke-width="3.3" stroke-linecap="round" fill="#ec1c24">
<path d="M135.2 256.7 L680.5 386.7"/>
<path d="M688.8 388.7 L678.85 381.1 L680.3 386.6 L676.5 390.9 Z" stroke-width=".6" stroke-linejoin="miter"/>
<path d="M141 509.5 L688 495.3"/>
<path d="M696.5 495 L685.05 490.2 L687.7 495.25 L685.3 500.4 Z" stroke-width=".6" stroke-linejoin="miter"/>
</g>
</svg>
<div class="t c" style="left:85px;top:208px;font-size:12px;color:#0000ff" id="b1">sine</div>
<div class="t c" style="left:85px;top:310.5px;font-size:12px" id="b2">f=10</div>
<div class="t c" style="left:85px;top:437px;font-size:12px;color:#0000ff" id="b3">sine1</div>
<div class="t c" style="left:85px;top:539.5px;font-size:12px" id="b4">f=1</div>

</body></html>
